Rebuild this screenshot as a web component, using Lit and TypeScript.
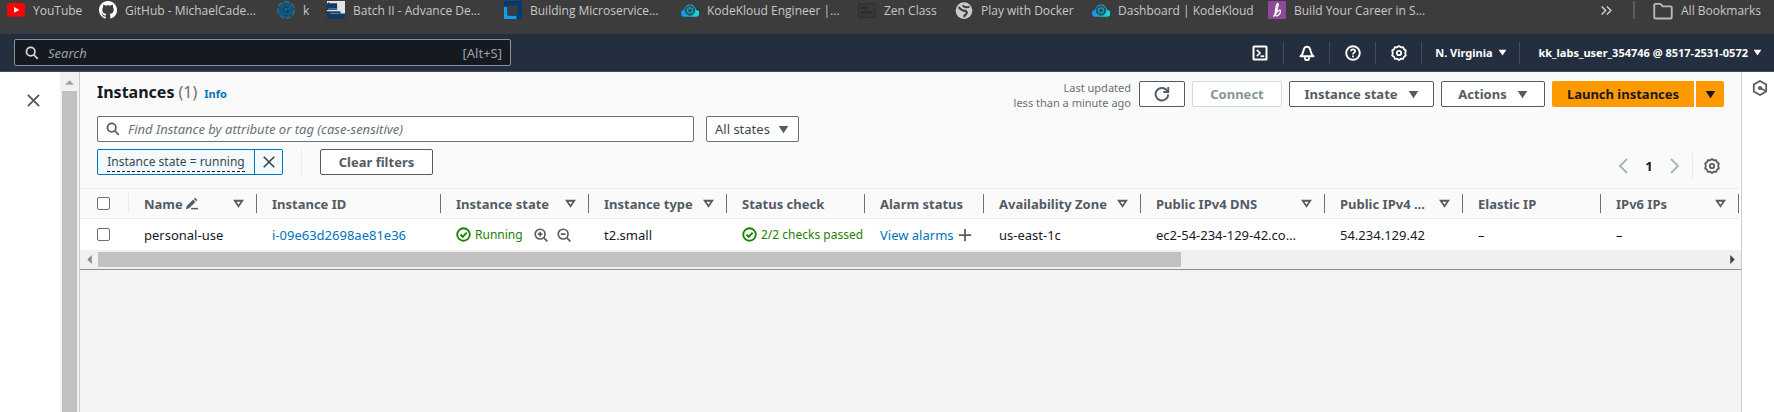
import { LitElement, html, css, svg, nothing } from "lit";
import { customElement } from "lit/decorators.js";

const shared = css`
  * {
    box-sizing: border-box;
  }
  button,
  input,
  select {
    font: inherit;
    color: inherit;
    margin: 0;
    padding: 0;
    border: 0;
    background: none;
    outline: none;
    border-radius: 0;
  }
  button,
  select {
    cursor: pointer;
    white-space: nowrap;
  }
  a {
    color: inherit;
    text-decoration: none;
  }
  svg {
    display: block;
    flex: none;
  }
`;

const gearTeeth = "M8 1 9.9 2.3 12.2 2.2 13 4.3 14.8 5.6 14.2 8 14.8 10.4 13 11.7 12.2 13.8 9.9 13.7 8 15 6.1 13.7 3.8 13.8 3 11.7 1.2 10.4 1.8 8 1.2 5.6 3 4.3 3.8 2.2 6.1 2.3Z";

const glyphs: Record<string, unknown> = {
  search: svg`<g fill="none" stroke="currentColor" stroke-width="2"><circle cx="6.5" cy="6.5" r="4.8"/><path d="M10 10l4.6 4.6"/></g>`,
  terminal: svg`<g fill="none" stroke="currentColor" stroke-width="2"><rect x="1.500" y="1.500" width="13" height="13" rx="0.6"/><path d="M4.800 4.800l3.200 3.200-3.200 3.200" stroke-width="1.7"/><path d="M8.500 11.200h3.700" stroke-width="1.7"/></g>`,
  bell: svg`<g fill="none" stroke="currentColor" stroke-width="2" stroke-linejoin="round"><path d="M1.500 11.200h13C12.600 9.800 12 8 11.600 6 11.200 3.400 10 1.700 8 1.700S4.800 3.400 4.400 6C4 8 3.400 9.800 1.500 11.200Z"/><path d="M6 12.300v.9a2 2 0 0 0 4 0v-.9"/></g>`,
  help: svg`<g fill="none" stroke="currentColor" stroke-width="1.9"><circle cx="8" cy="8" r="6.8"/><path d="M5.900 6.300C6 5 6.800 4.400 8 4.400c1.300 0 2.100.7 2.100 1.800C10.100 7.600 8 7.700 8 9.400" stroke-width="1.7"/><path d="M8 10.500v1.700" stroke-width="1.8"/></g>`,
  gear: svg`<g fill="none" stroke="currentColor" stroke-width="1.800" stroke-linejoin="round"><path d=${gearTeeth}/><circle cx="8" cy="8" r="2.200" stroke-width="1.800"/></g>`,
  close: svg`<path d="M2 2l12 12M14 2L2 14" fill="none" stroke="currentColor" stroke-width="2"/>`,
  refresh: svg`<g fill="none" stroke="currentColor" stroke-width="2"><path d="M14.200 8.400A6.300 6.300 0 1 1 12.400 3.800L14 5.600"/><path d="M14.300 1v5h-5" stroke-width="1.800"/></g>`,
  left: svg`<path d="M12 1L5 8l7 7" fill="none" stroke="currentColor" stroke-width="2"/>`,
  right: svg`<path d="M4 1l7 7-7 7" fill="none" stroke="currentColor" stroke-width="2"/>`,
  caret: svg`<path d="M1 3h14L8 13.500Z" fill="currentColor"/>`,
  sort: svg`<path d="M2.500 4h11L8 12Z" fill="none" stroke="currentColor" stroke-width="2.600"/>`,
  edit: svg`<path d="M1 15l1.200-4L10 3.200l2.800 2.800L5 13.800Z" fill="currentColor"/><path d="M10.900 2.300l1.500-1.500 2.800 2.800-1.500 1.500Z" fill="currentColor"/><path d="M7.500 14.300H16" stroke="currentColor" stroke-width="1.800"/>`,
  ok: svg`<g fill="none" stroke="currentColor" stroke-width="2"><circle cx="8" cy="8" r="6.700"/><path d="M4.800 8l2.400 2.500 4.200-4.600"/></g>`,
  zoomin: svg`<g fill="none" stroke="currentColor" stroke-width="1.900"><circle cx="7" cy="7" r="5.600"/><path d="M11 11l4.300 4.300M7 4.300v5.400M4.300 7h5.400"/></g>`,
  zoomout: svg`<g fill="none" stroke="currentColor" stroke-width="1.900"><circle cx="7" cy="7" r="5.600"/><path d="M11 11l4.300 4.300M4.300 7h5.400"/></g>`,
  plus: svg`<path d="M8 1v14M1 8h14" stroke="currentColor" stroke-width="2"/>`,
  hexagon: svg`<g fill="none" stroke="currentColor" stroke-width="1.800"><path d="M8 1l6.200 3.500v7L8 15l-6.200-3.500v-7Z"/><path d="M13.500 10.800L8.500 8.300"/></g><circle cx="8" cy="8" r="2" fill="currentColor"/>`,
  youtube: svg`<rect x="0" y="1.800" width="16" height="12.200" rx="3" fill="#f00"/><path d="M6.300 5.300v5.200L11 7.900Z" fill="#fff"/>`,
  github: svg`<path fill="#fff" fill-rule="evenodd" d="M8 0C3.580 0 0 3.580 0 8c0 3.540 2.290 6.530 5.470 7.590.4.070.55-.17.55-.38 0-.19-.01-.82-.01-1.490-2.010.37-2.530-.49-2.690-.94-.09-.23-.48-.94-.82-1.130-.28-.15-.68-.52-.01-.53.63-.01 1.080.58 1.230.82.72 1.210 1.870.87 2.330.66.07-.52.28-.87.51-1.070-1.780-.2-3.640-.89-3.640-3.950 0-.87.31-1.590.82-2.150-.08-.2-.36-1.020.08-2.120 0 0 .67-.21 2.200.82.64-.18 1.320-.27 2-.27s1.360.09 2 .27c1.530-1.040 2.200-.82 2.200-.82.44 1.100.16 1.920.08 2.120.51.56.82 1.270.82 2.150 0 3.070-1.870 3.750-3.650 3.950.29.25.54.73.54 1.480 0 1.070-.01 1.930-.01 2.200 0 .21.15.46.55.38A8 8 0 0 0 16 8c0-4.420-3.580-8-8-8Z"/>`,
  rings: svg`<circle cx="8" cy="8" r="6" fill="#0d6795"/><g fill="none" stroke="#1a76a5"><circle cx="8" cy="8" r="7.300" stroke-width="1.200" stroke-dasharray="5 1.500"/><circle cx="8" cy="8" r="4.800" stroke="#0a4c70"/><path d="M10 6.200A2.600 2.600 0 1 0 10.500 8.500H8" stroke="#0e4058" stroke-width="1.300"/></g>`,
  batch: svg`<path d="M0 0h16v16H0Z" fill="#e4e4e8"/><path d="M0 2h1V1h1v1h7v6H0ZM0 9h12v2h4v5H0Z" fill="#123a66"/><path d="M1 7h8M3 11h8" stroke="#7c93ad" stroke-width=".8"/>`,
  tiles: svg`<path d="M0 0h16v16H0Z" fill="#003a70"/><path d="M0 5h3v8h8v3H0Z" fill="#1a9be8"/><path d="M3 4h9v8H3Z" fill="#3c3c3c"/>`,
  cloud: svg`<defs><linearGradient id="sky" x1="0" x2="1"><stop offset="0" stop-color="#1989e8"/><stop offset="1" stop-color="#18e0dc"/></linearGradient></defs><path d="M3 14a3 3 0 0 1-.5-6C3.500 4.800 5.500 3 8 3s4.500 1.800 5.500 5a3 3 0 0 1-.5 6Z" fill="url(#sky)"/><circle cx="8" cy="8.400" r="4.600" fill="#175566"/><circle cx="8" cy="8.400" r="2.300" fill="none" stroke="#2b9a9c" stroke-width="1.200"/>`,
  card: svg`<rect x=".5" y="2.500" width="15" height="12" rx="1" fill="#383838" stroke="#303030"/><path d="M3 6h6M3 10h10" stroke="#2b2b2b" stroke-width="2"/>`,
  globe: svg`<circle cx="8" cy="8.500" r="7.400" fill="#c9cbcf"/><path d="M3 5.500C5 6 5 8.500 7.500 8.500S11.500 10 10 11.500 8.500 13.500 7.500 14" fill="none" stroke="#3c3c3c" stroke-width="1.900"/><path d="M7 3.500c.5 2 3 2.500 6 1.500" fill="none" stroke="#3c3c3c" stroke-width="1.700"/>`,
  script: svg`<rect width="16" height="16" rx="1" fill="#8e4a97"/><path d="M5 14C7 10 9.500 5 9 2.500 8 1 6.500 6 6.300 13c1-3.500 4-6 4.700-4.500C11.500 10.500 9 14 7 13" fill="none" stroke="#fff" stroke-width="1.200"/>`,
  folder: svg`<path d="M1 3.300A1 1 0 0 1 2 2.300h4l1.700 2H14a1 1 0 0 1 1 1V13a1 1 0 0 1-1 1H2a1 1 0 0 1-1-1Z" fill="none" stroke="#b9b9b9" stroke-width="1.500"/>`,
  more: svg`<path d="M2 3l5 5-5 5M8.500 3l5 5-5 5" fill="none" stroke="#d0d0d0" stroke-width="1.800"/>`,
  up: svg`<path d="M0 12l8-8 8 8Z" fill="currentColor"/>`,
  back: svg`<path d="M12 0v16L4 8Z" fill="currentColor"/>`,
  next: svg`<path d="M4 0v16l8-8Z" fill="currentColor"/>`,
};

const icon = (name: string, size = 16) =>
  html`<svg width=${size} height=${size} viewBox="0 0 16 16" aria-hidden="true">${glyphs[name]}</svg>`;

@customElement("bookmark-bar")
class BookmarkBar extends LitElement {
  static styles = [
    shared,
    css`
      :host {
        display: flex;
        align-items: flex-start;
        height: 34px;
        padding: 1px 13px 0 7px;
        background: #3c3c3c;
        color: #c8c8c8;
        font: 12px/20px "Open Sans", "Noto Sans", sans-serif;
        overflow: hidden;
      }
      .list {
        display: grid;
        grid-template-columns: 92px 178px 50px 177px 177px 177px 97px 137px 176px auto;
        flex: 1;
      }
      .mark {
        display: flex;
        gap: 8px;
        white-space: nowrap;
      }
      .more {
        display: flex;
        align-items: center;
        height: 18px;
      }
      .rule {
        width: 2px;
        height: 18px;
        margin: 0 18px 0 20px;
        background: #5c5c5c;
      }
    `,
  ];

  marks = [
    ["youtube", "YouTube"],
    ["github", "GitHub - MichaelCade..."],
    ["rings", "k"],
    ["batch", "Batch II - Advance De..."],
    ["tiles", "Building Microservice..."],
    ["cloud", "KodeKloud Engineer |..."],
    ["card", "Zen Class"],
    ["globe", "Play with Docker"],
    ["cloud", "Dashboard | KodeKloud"],
    ["script", "Build Your Career in S..."],
  ];

  render() {
    return html`
      <nav class="list" aria-label="Bookmarks">
        ${this.marks.map(([glyph, label]) => html`<a class="mark" href="#">${icon(glyph, 18)}<span>${label}</span></a>`)}
      </nav>
      <button class="more" aria-label="More bookmarks">${icon("more", 13)}</button>
      <span class="rule"></span>
      <a class="mark" href="#">${icon("folder", 20)}<span>All Bookmarks</span></a>
    `;
  }
}

@customElement("console-nav")
class ConsoleNav extends LitElement {
  static styles = [
    shared,
    css`
      :host {
        display: flex;
        align-items: center;
        justify-content: space-between;
        height: 38px;
        padding: 0 12px 0 14px;
        background: #232f3e;
        border-bottom: 1px solid #414d5c;
        color: #fff;
      }
      .search {
        display: flex;
        align-items: center;
        gap: 9px;
        flex: 0 1 497px;
        height: 27px;
        padding: 0 8px 0 10px;
        border: 1px solid #879596;
        border-radius: 2px;
        background: #16191f;
        color: #d5dbdb;
      }
      .field {
        flex: 1;
        min-width: 0;
      }
      .field::placeholder {
        color: #95a5a6;
        font-style: italic;
        opacity: 1;
      }
      .hint {
        color: #95a5a6;
        font-size: 13px;
      }
      .tools {
        display: flex;
        align-items: center;
        font-size: 11px;
        font-weight: 700;
      }
      .tool {
        display: flex;
        align-items: center;
        justify-content: center;
        gap: 5px;
        width: 46px;
        height: 22px;
        border-left: 1px solid #414d5c;
      }
      .first {
        border-left: 0;
      }
      .region {
        width: 98px;
      }
      .account {
        width: auto;
        padding-left: 18px;
      }
    `,
  ];

  render() {
    return html`
      <label class="search">
        ${icon("search", 14)}
        <input class="field" type="search" placeholder="Search" aria-label="Search" />
        <span class="hint">[Alt+S]</span>
      </label>
      <div class="tools">
        <button class="tool first" aria-label="CloudShell">${icon("terminal")}</button>
        <button class="tool" aria-label="Notifications">${icon("bell")}</button>
        <button class="tool" aria-label="Help">${icon("help")}</button>
        <button class="tool" aria-label="Settings">${icon("gear")}</button>
        <button class="tool region">N. Virginia ${icon("caret", 9)}</button>
        <button class="tool account">kk_labs_user_354746 @ 8517-2531-0572 ${icon("caret", 9)}</button>
      </div>
    `;
  }
}

@customElement("filter-header")
class FilterHeader extends LitElement {
  static styles = [
    shared,
    css`
      :host {
        display: flex;
        flex-direction: column;
        gap: 6px;
        padding: 8px 17px 9px;
        background: #fafafa;
        color: #545b64;
      }
      .row {
        display: flex;
        align-items: flex-start;
      }
      .title {
        display: flex;
        align-items: baseline;
        gap: 4px;
        margin: 0 auto 0 0;
        color: #16191f;
        font-size: 16px;
        line-height: 24px;
      }
      .count {
        color: #687078;
        font-weight: 400;
      }
      .info {
        color: #0073bb;
        font-size: 11px;
        font-weight: 700;
        padding-left: 3px;
      }
      .updated {
        margin-right: 8px;
        color: #687078;
        font-size: 11px;
        line-height: 15px;
        text-align: right;
      }
      .actions {
        display: flex;
        gap: 7px;
        margin-top: 1px;
      }
      .button {
        display: flex;
        align-items: center;
        justify-content: center;
        gap: 10px;
        height: 26px;
        border: 1px solid #545b64;
        border-radius: 2px;
        background: #fff;
        font-weight: 700;
      }
      .refresh {
        width: 46px;
      }
      .connect {
        width: 90px;
        border-color: #d5dbdb;
        color: #879596;
      }
      .state {
        width: 145px;
      }
      .menu {
        width: 104px;
      }
      .clear {
        width: 113px;
      }
      .split {
        display: flex;
        gap: 2px;
      }
      .launch {
        width: 142px;
        border: 0;
        background: #f90;
        color: #16191f;
        border-radius: 2px 0 0 2px;
      }
      .arrow {
        width: 28px;
        border-radius: 0 2px 2px 0;
      }
      .filters {
        gap: 12px;
      }
      .search {
        display: flex;
        align-items: center;
        gap: 8px;
        flex: 0 1 597px;
        height: 26px;
        padding: 0 8px;
        border: 1px solid #687078;
        border-radius: 2px;
        background: #fff;
      }
      .field {
        flex: 1;
        min-width: 0;
      }
      .field::placeholder {
        color: #687078;
        font-style: italic;
        opacity: 1;
      }
      .choice {
        display: grid;
        grid-template-columns: 1fr 11px;
        align-items: center;
        width: 93px;
        height: 26px;
        padding-right: 9px;
        border: 1px solid #687078;
        border-radius: 2px;
        background: #fff;
      }
      .select {
        appearance: none;
        padding-left: 8px;
        color: #414750;
      }
      .tokens {
        padding-top: 1px;
      }
      .token {
        display: flex;
        height: 26px;
        border: 1px solid #0073bb;
        border-radius: 2px;
        background: #f1faff;
        color: #414750;
        font-size: 12px;
      }
      .term {
        display: flex;
        align-items: center;
        width: 156px;
        justify-content: center;
      }
      .words {
        line-height: 18px;
        border-bottom: 1px dashed #16191f;
      }
      .remove {
        display: grid;
        place-items: center;
        width: 28px;
        border-left: 1px solid #0073bb;
      }
      .rule {
        width: 1px;
        height: 26px;
        margin: 0 18px;
        background: #eaeded;
      }
      .pager {
        display: flex;
        align-items: center;
        gap: 9px;
        margin: 4px 4px 0 auto;
        color: #aab7b8;
      }
      .page {
        width: 18px;
        color: #16191f;
        font-weight: 700;
        text-align: center;
      }
      .edge {
        margin: 0 2px 0 0;
      }
      .gear {
        color: #545b64;
      }
    `,
  ];

  render() {
    return html`
      <div class="row">
        <h1 class="title">Instances <span class="count">(1)</span> <a class="info" href="#">Info</a></h1>
        <div class="updated">Last updated<br />less than a minute ago</div>
        <div class="actions">
          <button class="button refresh" aria-label="Refresh">${icon("refresh", 16)}</button>
          <button class="button connect" disabled>Connect</button>
          <button class="button state">Instance state ${icon("caret", 11)}</button>
          <button class="button menu">Actions ${icon("caret", 11)}</button>
          <div class="split">
            <button class="button launch">Launch instances</button>
            <button class="button launch arrow" aria-label="More launch options">${icon("caret", 11)}</button>
          </div>
        </div>
      </div>
      <div class="row filters">
        <label class="search">
          ${icon("search", 14)}
          <input class="field" type="search" aria-label="Find Instance" placeholder="Find Instance by attribute or tag (case-sensitive)" />
        </label>
        <label class="choice">
          <select class="select" aria-label="Instance states">
            <option>All states</option>
          </select>
          ${icon("caret", 11)}
        </label>
      </div>
      <div class="row tokens">
        <div class="token">
          <button class="term"><span class="words">Instance state = running</span></button>
          <button class="remove" aria-label="Remove filter">${icon("close", 14)}</button>
        </div>
        <span class="rule"></span>
        <button class="button clear">Clear filters</button>
        <div class="pager">
          <button aria-label="Previous page">${icon("left", 16)}</button>
          <span class="page">1</span>
          <button aria-label="Next page">${icon("right", 16)}</button>
          <span class="rule edge"></span>
          <button class="gear" aria-label="Preferences">${icon("gear", 16)}</button>
        </div>
      </div>
    `;
  }
}

interface Column {
  label: string;
  width: number;
  sort?: boolean;
  edit?: boolean;
}

@customElement("instance-table")
class InstanceTable extends LitElement {
  static styles = [
    shared,
    css`
      :host {
        display: block;
        border-bottom: 1px solid #879196;
      }
      .scroller {
        overflow: hidden;
        background: #fff;
      }
      .table {
        width: 1659px;
        table-layout: fixed;
        border-collapse: separate;
        border-spacing: 0;
        background: #fff;
      }
      .head {
        padding: 0;
        height: 31px;
        border-top: 1px solid #eaeded;
        border-bottom: 1px solid #eaeded;
        background: #fafafa;
        color: #545b64;
        font-weight: 700;
        text-align: left;
      }
      .caption {
        display: flex;
        align-items: center;
        height: 19px;
        padding: 0 12px 0 15px;
        border-right: 1px solid #687078;
        white-space: nowrap;
      }
      .pick {
        border-right-color: #eaeded;
      }
      .sort {
        margin-left: auto;
      }
      .edit {
        padding-left: 2px;
      }
      .cell {
        padding: 0 1px 0 15px;
        height: 31px;
        overflow: hidden;
        white-space: nowrap;
        color: #16191f;
      }
      .line {
        display: flex;
        align-items: center;
        gap: 4px;
      }
      .good {
        color: #1d8102;
        font-size: 12px;
      }
      .link {
        color: #0073bb;
      }
      .tool {
        color: #545b64;
      }
      .lead {
        padding-left: 7px;
      }
      .next {
        padding-left: 5px;
      }
      .box {
        appearance: none;
        display: block;
        width: 13px;
        height: 13px;
        margin-left: 2px;
        border: 1px solid #687078;
        border-radius: 2px;
        background: #fff;
      }
      .bar {
        display: grid;
        grid-template-columns: 18px 1fr 18px;
        align-items: center;
        justify-items: center;
        height: 19px;
        background: #f0f0f0;
        color: #8b8b8b;
      }
      .track {
        width: 100%;
      }
      .thumb {
        width: calc(100% * 2 / 3);
        height: 15px;
        background: #c1c1c1;
      }
      .end {
        color: #404040;
      }
    `,
  ];

  columns: Column[] = [
    { label: "Name", width: 128, sort: true, edit: true },
    { label: "Instance ID", width: 184 },
    { label: "Instance state", width: 148, sort: true },
    { label: "Instance type", width: 138, sort: true },
    { label: "Status check", width: 138 },
    { label: "Alarm status", width: 119 },
    { label: "Availability Zone", width: 157, sort: true },
    { label: "Public IPv4 DNS", width: 184, sort: true },
    { label: "Public IPv4 ...", width: 138, sort: true },
    { label: "Elastic IP", width: 138 },
    { label: "IPv6 IPs", width: 138, sort: true },
  ];

  render() {
    return html`
      <div class="scroller">
        <table class="table">
          <colgroup>
            <col style="width:49px" />
            ${this.columns.map((c) => html`<col style="width:${c.width}px" />`)}
          </colgroup>
          <thead>
            <tr>
              <th class="head"><div class="caption pick"><input class="box" type="checkbox" aria-label="Select all" /></div></th>
              ${this.columns.map(
                (c) => html`<th class="head">
                  <div class="caption">
                    <span>${c.label}</span>
                    ${c.edit ? html`<span class="edit">${icon("edit", 13)}</span>` : nothing}
                    ${c.sort ? html`<span class="sort">${icon("sort", 11)}</span>` : nothing}
                  </div>
                </th>`
              )}
            </tr>
          </thead>
          <tbody>
            <tr>
              <td class="cell"><input class="box" type="checkbox" aria-label="Select personal-use" /></td>
              <td class="cell">personal-use</td>
              <td class="cell"><a class="link" href="#">i-09e63d2698ae81e36</a></td>
              <td class="cell">
                <div class="line good">
                  ${icon("ok", 15)}<span>Running</span>
                  <button class="tool lead" aria-label="Include running">${icon("zoomin", 14)}</button>
                  <button class="tool next" aria-label="Exclude running">${icon("zoomout", 14)}</button>
                </div>
              </td>
              <td class="cell">t2.small</td>
              <td class="cell"><div class="line good">${icon("ok", 15)}<span>2/2 checks passed</span></div></td>
              <td class="cell">
                <div class="line"><a class="link" href="#">View alarms</a><button class="tool" aria-label="Add alarm">${icon("plus", 14)}</button></div>
              </td>
              <td class="cell">us-east-1c</td>
              <td class="cell">ec2-54-234-129-42.co…</td>
              <td class="cell">54.234.129.42</td>
              <td class="cell">–</td>
              <td class="cell">–</td>
            </tr>
          </tbody>
        </table>
      </div>
      <div class="bar">
        ${icon("back", 9)}
        <div class="track"><div class="thumb"></div></div>
        <span class="end">${icon("next", 9)}</span>
      </div>
    `;
  }
}

@customElement("app-root")
class AppRoot extends LitElement {
  static styles = [
    shared,
    css`
      :host {
        display: flex;
        flex-direction: column;
        min-height: 100vh;
        background: #fff;
        font: 13px/18px "Noto Sans", "Open Sans", sans-serif;
      }
      .body {
        display: flex;
        flex: 1;
      }
      .side {
        width: 60px;
        padding: 21px 0 0 26px;
        color: #545b64;
      }
      .scroll {
        display: flex;
        flex-direction: column;
        align-items: center;
        gap: 4px;
        width: 20px;
        padding: 6px 3px 0 2px;
        border-right: 1px solid #ccc;
        background: #f1f1f1;
        color: #a3a3a3;
      }
      .thumb {
        flex: 1;
        width: 15px;
        background: #c1c1c1;
      }
      .main {
        flex: 1;
        min-width: 0;
        background: #f2f3f3;
      }
      .rail {
        width: 33px;
        padding: 8px 0 0 10px;
        border-left: 1px solid #ccc;
        color: #545b64;
      }
    `,
  ];

  render() {
    return html`
      <bookmark-bar></bookmark-bar>
      <console-nav></console-nav>
      <div class="body">
        <aside class="side"><button aria-label="Close panel">${icon("close", 15)}</button></aside>
        <div class="scroll">${icon("up", 9)}<div class="thumb"></div></div>
        <main class="main">
          <filter-header></filter-header>
          <instance-table></instance-table>
        </main>
        <aside class="rail"><button aria-label="Open tools">${icon("hexagon", 16)}</button></aside>
      </div>
    `;
  }
}
